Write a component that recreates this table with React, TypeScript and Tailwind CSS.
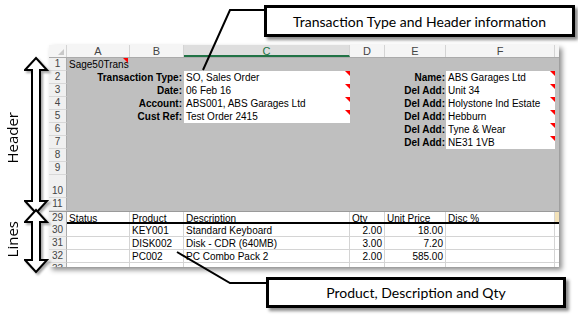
import React from "react";

const cols = [
  { key: "A", w: "w-[63px]" },
  { key: "B", w: "w-[54px]" },
  { key: "C", w: "w-[166px]" },
  { key: "D", w: "w-[35px]" },
  { key: "E", w: "w-[61px]" },
  { key: "F", w: "w-[109px]" },
];

const headerLeft = [
  { label: "Transaction Type:", value: "SO, Sales Order" },
  { label: "Date:", value: "06 Feb 16" },
  { label: "Account:", value: "ABS001, ABS Garages Ltd" },
  { label: "Cust Ref:", value: "Test Order 2415" },
];

const headerRight = [
  { label: "Name:", value: "ABS Garages Ltd" },
  { label: "Del Add:", value: "Unit 34" },
  { label: "Del Add:", value: "Holystone Ind Estate" },
  { label: "Del Add:", value: "Hebburn" },
  { label: "Del Add:", value: "Tyne & Wear" },
  { label: "Del Add:", value: "NE31 1VB" },
];

const lines = [
  { row: 30, product: "KEY001", desc: "Standard Keyboard", qty: "2.00", price: "18.00" },
  { row: 31, product: "DISK002", desc: "Disk - CDR (640MB)", qty: "3.00", price: "7.20" },
  { row: 32, product: "PC002", desc: "PC Combo Pack 2", qty: "2.00", price: "585.00" },
];

function Flag() {
  return (
    <span className="absolute right-0 top-0 h-0 w-0 border-l-[5px] border-t-[5px] border-l-transparent border-t-[#ff0000]" />
  );
}

function RowNum({ n, tall }: { n?: number; tall?: boolean }) {
  return (
    <div
      className={
        "flex w-[18px] shrink-0 items-end justify-center border-b border-r border-b-[#d8d8d8] border-r-[#ababab] bg-[#f0f0f0] pb-px text-[10px] leading-none text-[#444] " +
        (tall ? "h-[23px]" : "h-[13px]")
      }
    >
      {n}
    </div>
  );
}

export default function App() {
  return (
    <div className="relative flex h-[315px] w-[578px] overflow-hidden bg-white font-['Liberation_Sans',Arial,sans-serif]">
      {/* side labels + arrows */}
      <div className="flex w-[49px] shrink-0">
        <div className="flex w-[24px] flex-col items-center font-['Open_Sans',sans-serif] text-[15px] leading-none text-black">
          <span className="mt-[112px] rotate-180 [writing-mode:vertical-rl]">Header</span>
          <span className="mt-[57px] rotate-180 [writing-mode:vertical-rl]">Lines</span>
        </div>
        <svg width="25" height="315" className="drop-shadow-[2px_2px_1px_rgba(0,0,0,0.35)]">
          <path
            d="M12 58 L23 70 L16 70 L16 201 L23 201 L12 213 L1 201 L8 201 L8 70 L1 70 Z"
            fill="white"
            stroke="black"
            strokeWidth="2"
            strokeLinejoin="miter"
          />
          <path
            d="M12 210 L23 222 L16 222 L16 260 L23 260 L12 272 L1 260 L8 260 L8 222 L1 222 Z"
            fill="white"
            stroke="black"
            strokeWidth="2"
          />
        </svg>
      </div>

      {/* spreadsheet */}
      <div className="pt-[45px]">
        <div className="h-[222px] w-[510px] overflow-hidden bg-white text-[10px] leading-[13px] text-black shadow-[3px_3px_5px_rgba(0,0,0,0.45)]">
          {/* column letters */}
          <div className="flex h-[13px] border-b border-[#ababab] bg-[#f5f5f5] text-[11px] leading-[12px] text-[#444]">
            <div className="relative w-[18px] shrink-0 border-r border-[#d4d4d4]">
              <span className="absolute bottom-[2px] right-[2px] h-0 w-0 border-b-[6px] border-l-[6px] border-b-[#c8c8c8] border-l-transparent" />
            </div>
            {cols.map((c) =>
              c.key === "C" ? (
                <div key={c.key} className={c.w + " shrink-0 border-b-2 border-r border-b-[#217346] border-r-[#d4d4d4] bg-[#dedede] text-center text-[#217346]"}>
                  {c.key}
                </div>
              ) : (
                <div key={c.key} className={c.w + " shrink-0 border-r border-[#d4d4d4] text-center"}>
                  {c.key}
                </div>
              )
            )}
            <div className="w-[4px] shrink-0" />
          </div>

          {/* header block rows 1-11 */}
          <div className="flex">
            <div className="flex flex-col">
              {[1, 2, 3, 4, 5, 6, 7, 8, 9].map((n) => (
                <RowNum key={n} n={n} />
              ))}
              <RowNum n={10} tall />
              <RowNum n={11} />
            </div>
            <div className="flex w-[492px] flex-col bg-[#bfbfbf]">
              <div className="flex h-[13px]">
                <div className="relative w-[61px] pl-[2px]">
                  Sage50Trans
                  <Flag />
                </div>
              </div>
              {headerRight.map((r, i) => {
                const l = headerLeft[i];
                return (
                  <div key={i} className="flex h-[13px]">
                    <div className="w-[117px] pr-[2px] text-right font-bold">{l ? l.label : ""}</div>
                    <div className={"relative w-[166px] pl-[2px] " + (l ? "bg-white" : "")}>
                      {l ? l.value : ""}
                      {l ? <Flag /> : null}
                    </div>
                    <div className="w-[96px] pr-[1px] text-right font-bold">{r.label}</div>
                    <div className="relative w-[109px] bg-white pl-[2px]">
                      {r.value}
                      <Flag />
                    </div>
                  </div>
                );
              })}
            </div>
          </div>

          {/* lines block */}
          <div className="flex h-[13px] border-t border-[#9a9a9a]">
            <RowNum n={29} />
            <div className="flex flex-1 border-b-2 border-black">
              {["Status", "Product", "Description", "Qty", "Unit Price", "Disc %"].map((t, i) => (
                <div key={t} className={cols[i].w + " shrink-0 border-r border-[#d4d4d4] pl-[2px]"}>
                  {t}
                </div>
              ))}
              <div className="w-[4px] bg-[#f3e2b8]" />
            </div>
          </div>
          {lines.map((l) => (
            <div key={l.row} className="flex h-[13px]">
              <RowNum n={l.row} />
              <div className="flex flex-1 border-b border-[#d4d4d4]">
                <div className="w-[63px] shrink-0 border-r border-[#d4d4d4]" />
                <div className="w-[54px] shrink-0 border-r border-[#d4d4d4] pl-[2px]">{l.product}</div>
                <div className="w-[166px] shrink-0 border-r border-[#d4d4d4] pl-[2px]">{l.desc}</div>
                <div className="w-[35px] shrink-0 border-r border-[#d4d4d4] pr-[2px] text-right">{l.qty}</div>
                <div className="w-[61px] shrink-0 border-r border-[#d4d4d4] pr-[2px] text-right">{l.price}</div>
                <div className="w-[109px] shrink-0 border-r border-[#d4d4d4]" />
              </div>
            </div>
          ))}
          <div className="flex h-[13px]">
            <RowNum n={33} />
            <div className="flex flex-1">
              {cols.map((c) => (
                <div key={c.key} className={c.w + " shrink-0 border-r border-[#d4d4d4]"} />
              ))}
            </div>
          </div>
        </div>
      </div>

      {/* callouts */}
      <svg className="pointer-events-none absolute left-0 top-0" width="578" height="315">
        <polyline points="265,10 230,10 203,70" fill="none" stroke="black" strokeWidth="2" />
        <polyline points="177,252 230,283 266,283" fill="none" stroke="black" strokeWidth="2" />
      </svg>
      <div className="absolute left-[264px] top-[5px] flex h-[32px] w-[311px] items-center justify-center border-[3px] border-black bg-white font-['Lato',sans-serif] text-[14px] text-black shadow-[3px_3px_3px_rgba(0,0,0,0.45)]">
        Transaction Type and Header information
      </div>
      <div className="absolute left-[266px] top-[277px] flex h-[31px] w-[300px] items-center justify-center border-[3px] border-black bg-white font-['Lato',sans-serif] text-[14px] text-black shadow-[3px_3px_3px_rgba(0,0,0,0.45)]">
        Product, Description and Qty
      </div>
    </div>
  );
}
